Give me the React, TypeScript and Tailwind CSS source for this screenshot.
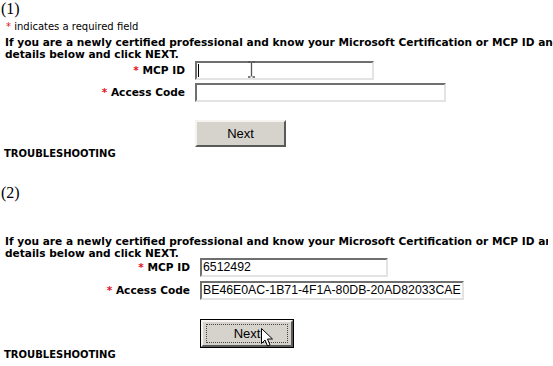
const verdana = "font-['Verdana','DejaVu_Sans',sans-serif]"

function Field({ label, width, value, focused }: { label: string; width: string; value?: string; focused?: boolean }) {
  return (
    <div className="flex items-center">
      <div className={`w-[195px] pr-[10px] text-right text-[10.6px] font-bold text-black ${verdana}`}>
        <span className="text-[#e0141e]">*</span> {label}
      </div>
      <div
        className={`relative h-[19px] ${width} whitespace-nowrap border-2 border-t-[#6f6f6f] border-l-[#6f6f6f] border-r-[#e3e3e3] border-b-[#e3e3e3] bg-white pl-[1px] font-['Liberation_Sans',Arial,sans-serif] text-[12.3px] leading-[15px] text-black`}
      >
        {value}
        {focused && <div className="absolute left-[1px] top-[1px] h-[13px] w-px bg-black" />}
      </div>
    </div>
  )
}

const intro = (
  <>
    If you are a newly certified professional and know your Microsoft Certification or MCP ID and enter your
    <br />
    details below and click NEXT.
  </>
)

export default function App() {
  return (
    <div className="h-[366px] w-[553px] overflow-hidden bg-white text-black">
      {/* (1) */}
      <div className="relative h-[180px]">
        <div className="pl-px font-['Liberation_Serif',serif] text-[16px] leading-[18px]">(1)</div>
        <div className={`mt-[2px] pl-[6px] text-[10px] leading-[13px] ${verdana}`}>
          <span className="text-[#e0141e]">*</span> indicates a required field
        </div>
        <p className={`mt-[3px] whitespace-nowrap pl-[5px] text-[10.6px] font-bold leading-[12px] ${verdana}`}>{intro}</p>
        <div className="mt-[1px] flex flex-col gap-[3px]">
          <Field label="MCP ID" width="w-[179px]" focused />
          <Field label="Access Code" width="w-[251px]" />
        </div>
        <div className="ml-[195px] mt-[18px] flex h-[27px] w-[91px] items-center justify-center border-2 border-t-[#f4f3ef] border-l-[#f4f3ef] border-r-[#5a5a5a] border-b-[#5a5a5a] bg-[#d6d3cc] font-['Liberation_Sans',Arial,sans-serif] text-[13px]">
          Next
        </div>
        <div className={`mt-[1px] pl-[4px] text-[10px] font-bold leading-[12px] ${verdana}`}>TROUBLESHOOTING</div>
        {/* I-beam mouse cursor */}
        <svg className="absolute left-[247px] top-[61px]" width="9" height="17" viewBox="0 0 9 17">
          <path d="M1 1h2.5M5.5 1H8M4.5 1.5v14M1 16h2.5M5.5 16H8" stroke="#555" strokeWidth="1.3" fill="none" />
        </svg>
      </div>
      {/* (2) */}
      <div className="relative w-[548px] overflow-hidden">
        <div className="mt-[4px] pl-px font-['Liberation_Serif',serif] text-[16px] leading-[18px]">(2)</div>
        <p className={`mt-[33px] whitespace-nowrap pl-[5px] text-[10.6px] font-bold leading-[12px] ${verdana}`}>{intro}</p>
        <div className="ml-[5px] mt-[-1px] flex flex-col gap-[4px]">
          <Field label="MCP ID" width="w-[188px]" value="6512492" />
          <Field label="Access Code" width="w-[264px]" value="BE46E0AC-1B71-4F1A-80DB-20AD82033CAE" />
        </div>
        <div className="ml-[200px] mt-[19px] h-[29px] w-[94px] border border-black">
          <div className="flex h-full w-full items-center justify-center border-2 border-t-[#f4f3ef] border-l-[#f4f3ef] border-r-[#5a5a5a] border-b-[#5a5a5a] bg-[#d6d3cc] font-['Liberation_Sans',Arial,sans-serif] text-[13px]">
            <div className="flex h-[19px] w-[82px] items-center justify-center border border-dotted border-[#444]">Next</div>
          </div>
        </div>
        <div className={`mt-[1px] pl-[4px] text-[10px] font-bold leading-[12px] ${verdana}`}>TROUBLESHOOTING</div>
        {/* arrow mouse cursor */}
        <svg className="absolute left-[261px] top-[148px]" width="12" height="19" viewBox="0 0 12 19">
          <path d="M0.5 0.5v15l3.5-3.5 2.5 6 2.5-1-2.5-6h5z" fill="#fff" stroke="#000" strokeWidth="1" strokeLinejoin="miter" />
        </svg>
      </div>
    </div>
  )
}
